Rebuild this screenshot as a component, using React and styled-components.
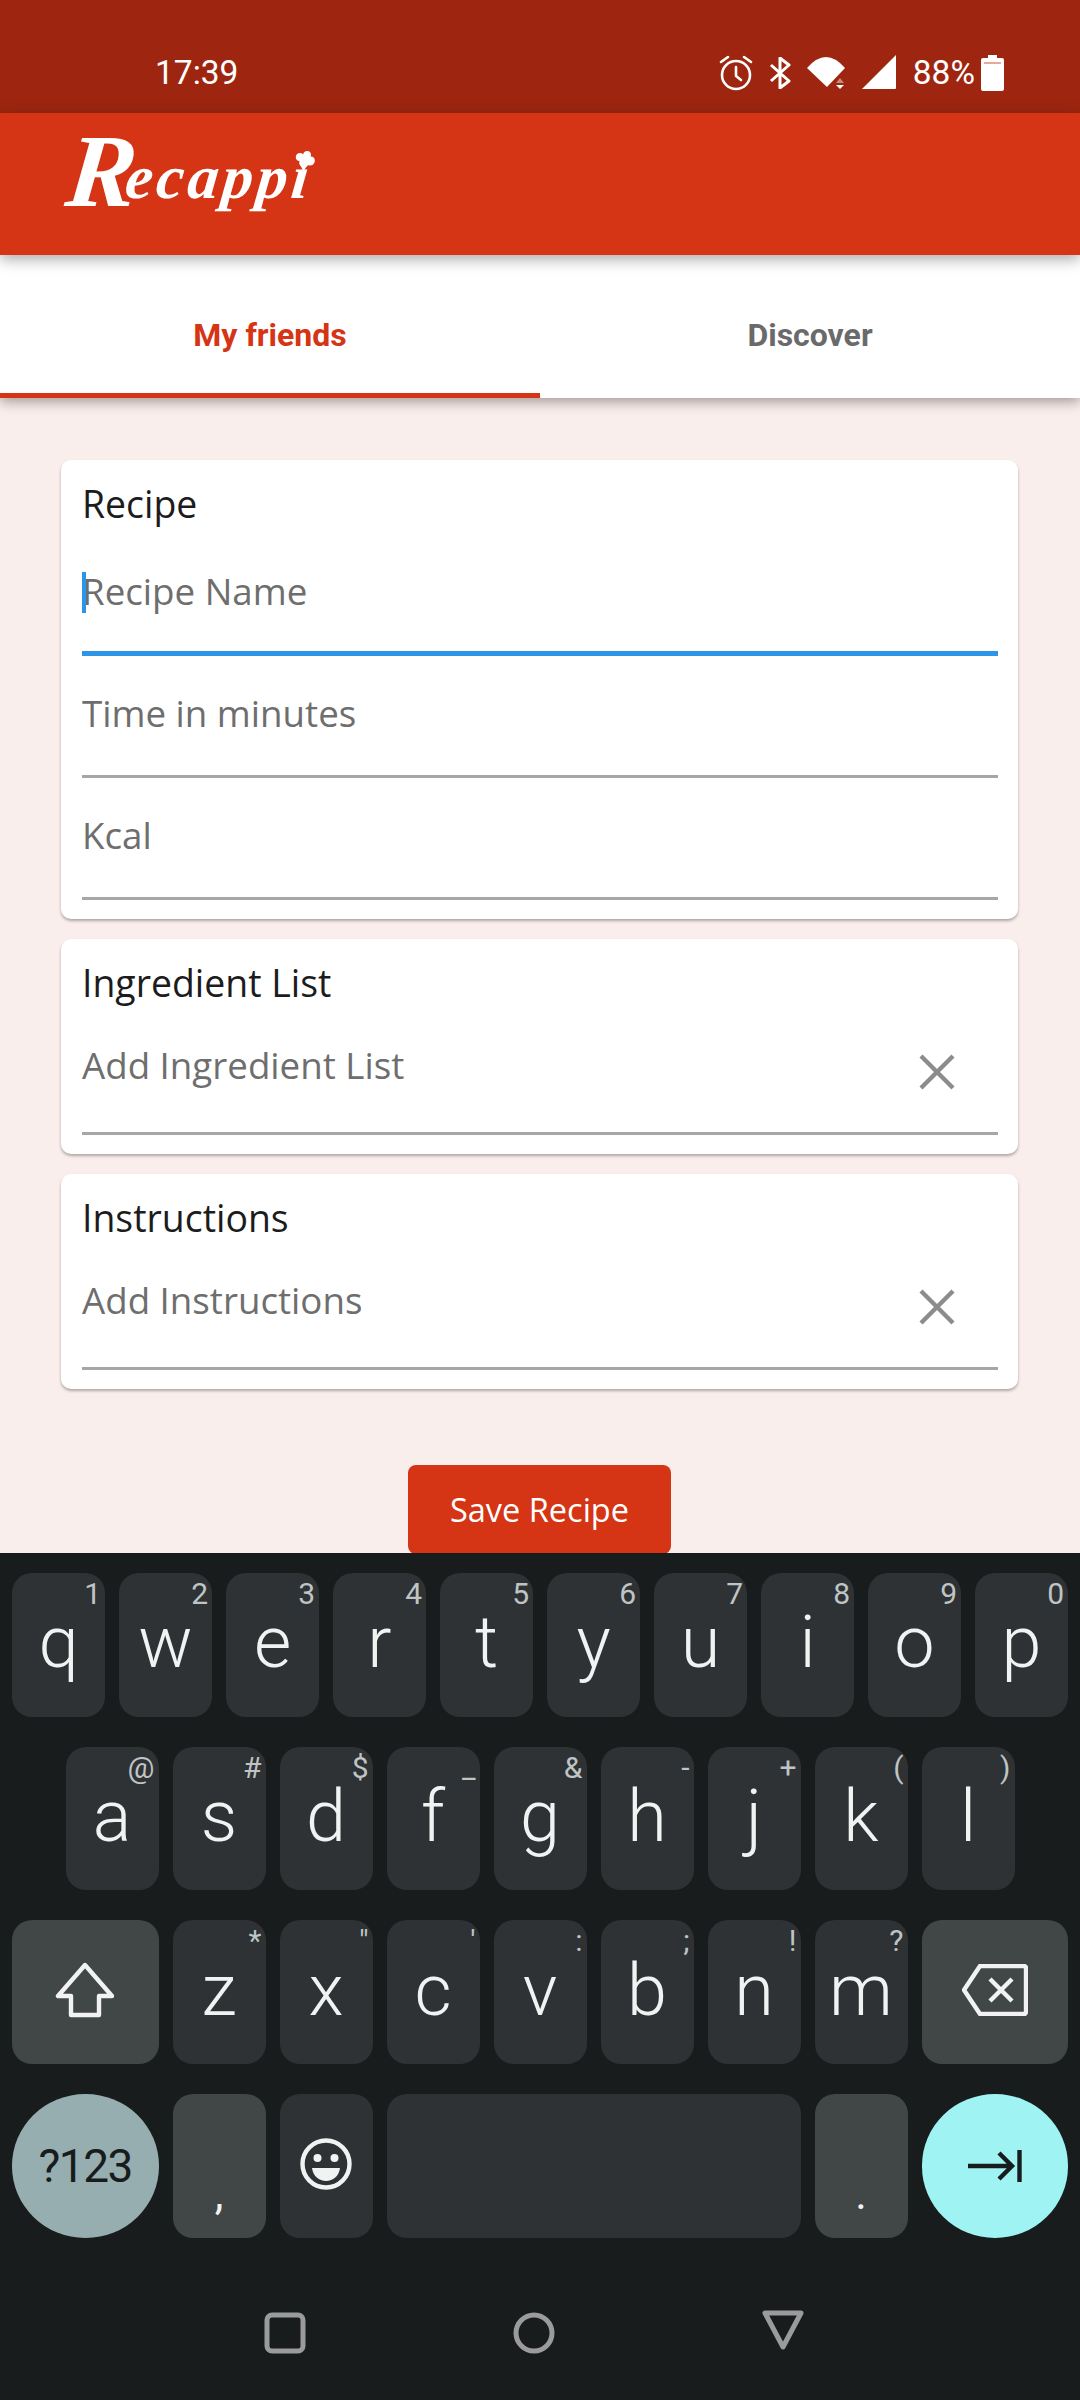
import React from "react";
import styled, { createGlobalStyle } from "styled-components";

const red = "#d53415";
const blue = "#2d95e8";
const keyboardBg = "#181c1d";

const row1 = [
  ["q", "1"], ["w", "2"], ["e", "3"], ["r", "4"], ["t", "5"],
  ["y", "6"], ["u", "7"], ["i", "8"], ["o", "9"], ["p", "0"],
];
const row2 = [
  ["a", "@"], ["s", "#"], ["d", "$"], ["f", "_"], ["g", "&"],
  ["h", "-"], ["j", "+"], ["k", "("], ["l", ")"],
];
const row3 = [
  ["z", "*"], ["x", '"'], ["c", "'"], ["v", ":"], ["b", ";"], ["n", "!"], ["m", "?"],
];

function AlarmIcon() {
  return (
    <svg width="34" height="36" viewBox="0 0 34 36" fill="none" stroke="#fff" strokeWidth="2.6" strokeLinecap="round">
      <circle cx="17" cy="20" r="14" />
      <path d="M17 12v9l5 4M2 7l7-5M32 7l-7-5" />
    </svg>
  );
}

function BluetoothIcon() {
  return (
    <svg width="22" height="32" viewBox="0 0 22 32" fill="none" stroke="#fff" strokeWidth="3" strokeLinejoin="round">
      <path d="M2 8l18 16-9 7V1l9 7L2 24" />
    </svg>
  );
}

function WifiIcon() {
  return (
    <svg width="39" height="32" viewBox="0 0 39 32">
      <path d="M0 11Q19-11 38 11L20 30Z" fill="#fff" />
      <path d="M29 26l4-5 4 5Z" fill="#fff" opacity=".45" />
      <path d="M29 28h8l-4 4Z" fill="#fff" />
    </svg>
  );
}

function SignalIcon() {
  return (
    <svg width="35" height="35" viewBox="0 0 35 35">
      <path d="M34 0v33a1 1 0 0 1-1 1H0Z" fill="#fff" />
    </svg>
  );
}

function BatteryIcon() {
  return (
    <svg width="23" height="36" viewBox="0 0 23 36">
      <path d="M7 0h9v3h5a2 2 0 0 1 2 2v29a2 2 0 0 1-2 2H2a2 2 0 0 1-2-2V5a2 2 0 0 1 2-2h5Z" fill="#fff" />
      <rect x="3" y="7" width="17" height="2" fill="#e9a898" />
    </svg>
  );
}

function CloseIcon() {
  return (
    <svg width="36" height="36" viewBox="0 0 36 36" stroke="#8c8c8c" strokeWidth="4.4">
      <path d="M2 2l32 32M34 2L2 34" />
    </svg>
  );
}

function ShiftIcon() {
  return (
    <svg width="60" height="56" viewBox="0 0 60 56" fill="none" stroke="#f1f3f3" strokeWidth="4.4" strokeLinejoin="round">
      <path d="M30 3L3 34h13v19h28V34h13Z" />
    </svg>
  );
}

function BackspaceIcon() {
  return (
    <svg width="66" height="52" viewBox="0 0 66 52" fill="none" stroke="#f1f3f3" strokeWidth="4.4" strokeLinejoin="round">
      <path d="M18 2h44a2 2 0 0 1 2 2v44a2 2 0 0 1-2 2H18L2 26Z" />
      <path d="M28 15l22 22M50 15L28 37" />
    </svg>
  );
}

function EmojiIcon() {
  return (
    <svg width="52" height="52" viewBox="0 0 52 52" fill="none">
      <circle cx="26" cy="26" r="23.5" stroke="#f1f3f3" strokeWidth="4.4" />
      <circle cx="17.5" cy="20" r="4" fill="#f1f3f3" />
      <circle cx="34.5" cy="20" r="4" fill="#f1f3f3" />
      <path d="M12 30h28c-1 8-7 13-14 13s-13-5-14-13Z" fill="#f1f3f3" />
    </svg>
  );
}

function TabArrowIcon() {
  return (
    <svg width="54" height="32" viewBox="0 0 54 32" fill="none" stroke={keyboardBg} strokeWidth="4.4">
      <path d="M0 16h44M31 3l13 13-13 13M51.5 0v32" />
    </svg>
  );
}

function SquareIcon() {
  return (
    <svg width="42" height="44" viewBox="0 0 42 44" fill="none" stroke="#9b9b9b" strokeWidth="5">
      <rect x="3" y="5" width="36" height="36" rx="5" />
    </svg>
  );
}

function CircleIcon() {
  return (
    <svg width="42" height="44" viewBox="0 0 42 44" fill="none" stroke="#9b9b9b" strokeWidth="5">
      <circle cx="21" cy="23" r="18" />
    </svg>
  );
}

function BackIcon() {
  return (
    <svg width="42" height="44" viewBox="0 0 42 44" fill="none" stroke="#9b9b9b" strokeWidth="5" strokeLinejoin="round">
      <path d="M3 3h36L21 37Z" />
    </svg>
  );
}

function FlowerIcon() {
  return (
    <svg width="22" height="21" viewBox="0 0 22 21" fill="#fff">
      <circle cx="6" cy="6" r="4" />
      <circle cx="13" cy="4" r="4" />
      <circle cx="17" cy="10" r="4.5" />
      <circle cx="11" cy="11" r="5" />
      <path d="M6 12l5 8 4-6Z" />
    </svg>
  );
}

function FormField({ placeholder, focused, compact, clearable }) {
  return (
    <Field $focused={focused} $compact={compact}>
      <Placeholder>
        {focused && <Caret />}
        {placeholder}
      </Placeholder>
      {clearable && (
        <ClearButton>
          <CloseIcon />
        </ClearButton>
      )}
    </Field>
  );
}

function LetterKey({ letter, hint }) {
  return (
    <Key>
      <Hint>{hint}</Hint>
      {letter}
    </Key>
  );
}

function App() {
  return (
    <Screen>
      <GlobalStyle />
      <StatusBar>
        <Clock>17:39</Clock>
        <StatusIcons>
          <AlarmIcon />
          <BluetoothIcon />
          <WifiIcon />
          <SignalIcon />
          <BatteryText>88%</BatteryText>
          <BatteryIcon />
        </StatusIcons>
      </StatusBar>

      <AppBar>
        <Logo>
          <LogoCap>R</LogoCap>ecappi
          <LogoFlower>
            <FlowerIcon />
          </LogoFlower>
        </Logo>
      </AppBar>

      <Tabs>
        <Tab $active>My friends</Tab>
        <Tab>Discover</Tab>
      </Tabs>

      <Content>
        <Card>
          <CardTitle>Recipe</CardTitle>
          <FormField placeholder="Recipe Name" focused />
          <FormField placeholder="Time in minutes" />
          <FormField placeholder="Kcal" />
        </Card>
        <Card>
          <CardTitle>Ingredient List</CardTitle>
          <FormField placeholder="Add Ingredient List" compact clearable />
        </Card>
        <Card>
          <CardTitle>Instructions</CardTitle>
          <FormField placeholder="Add Instructions" compact clearable />
        </Card>
        <SaveButton>Save Recipe</SaveButton>
      </Content>

      <Keyboard>
        <KeyRow>
          {row1.map(([letter, hint]) => (
            <LetterKey key={letter} letter={letter} hint={hint} />
          ))}
        </KeyRow>
        <KeyRow $inset>
          {row2.map(([letter, hint]) => (
            <LetterKey key={letter} letter={letter} hint={hint} />
          ))}
        </KeyRow>
        <KeyRow>
          <Key $wide $fn>
            <ShiftIcon />
          </Key>
          {row3.map(([letter, hint]) => (
            <LetterKey key={letter} letter={letter} hint={hint} />
          ))}
          <Key $wide $fn>
            <BackspaceIcon />
          </Key>
        </KeyRow>
        <KeyRow>
          <RoundKey $color="#96aeb0">?123</RoundKey>
          <PunctuationKey $fn>,</PunctuationKey>
          <EmojiKey>
            <EmojiIcon />
          </EmojiKey>
          <SpaceKey />
          <PunctuationKey $fn>.</PunctuationKey>
          <RoundKey $color="#a0f3f3">
            <TabArrowIcon />
          </RoundKey>
        </KeyRow>
        <NavBar>
          <SquareIcon />
          <CircleIcon />
          <BackIcon />
        </NavBar>
      </Keyboard>
    </Screen>
  );
}

export default App;

const GlobalStyle = createGlobalStyle`
  html, body {
    margin: 0;
    padding: 0;
    background: ${keyboardBg};
  }
  * {
    box-sizing: border-box;
  }
`;

const Screen = styled.div`
  width: 1080px;
  height: 2400px;
  display: flex;
  flex-direction: column;
  overflow: hidden;
  font-family: "Open Sans", "Liberation Sans", sans-serif;
`;

const StatusBar = styled.div`
  height: 113px;
  flex: none;
  background: #9e2610;
  display: flex;
  justify-content: space-between;
  align-items: center;
  padding: 32px 76px 0 155px;
  color: #fff;
  font-family: Roboto, sans-serif;
`;

const Clock = styled.span`
  font-size: 33.5px;
  font-weight: 400;
`;

const StatusIcons = styled.div`
  display: flex;
  align-items: center;
  gap: 16px;
`;

const BatteryText = styled.span`
  font-size: 33.5px;
  font-weight: 400;
  margin-right: -10px;
`;

const AppBar = styled.header`
  height: 142px;
  flex: none;
  background: ${red};
  padding: 8px 0 0 67px;
  position: relative;
  z-index: 3;
  box-shadow: 0 4px 14px rgba(0, 0, 0, 0.35);
`;

const Logo = styled.div`
  display: inline-block;
  position: relative;
  color: #fff;
  font-family: "Liberation Serif", serif;
  font-style: italic;
  font-weight: 700;
  font-size: 62px;
  letter-spacing: 3.5px;
  line-height: 100px;
  transform: skewX(-6deg);
`;

const LogoCap = styled.span`
  font-size: 104px;
  letter-spacing: -10px;
  vertical-align: -8px;
`;

const LogoFlower = styled.span`
  position: absolute;
  right: -1px;
  top: 30px;
  display: flex;
`;

const Tabs = styled.nav`
  height: 143px;
  flex: none;
  background: #fff;
  display: flex;
  position: relative;
  z-index: 2;
  box-shadow: 0 4px 12px rgba(0, 0, 0, 0.35);
  font-family: Roboto, sans-serif;
`;

const Tab = styled.div`
  flex: 1;
  display: flex;
  align-items: center;
  justify-content: center;
  font-size: 32px;
  font-weight: 700;
  padding-top: 22px;
  color: ${(p) => (p.$active ? red : "#6a6a6a")};
  border-bottom: 5px solid ${(p) => (p.$active ? red : "#fff")};
`;

const Content = styled.main`
  flex: 1;
  min-height: 0;
  background: #faeeec;
  overflow: hidden;
  padding: 62px 62px 0 61px;
  display: flex;
  flex-direction: column;
  gap: 20px;
`;

const Card = styled.section`
  background: #fff;
  border-radius: 10px;
  padding: 0 20px 19px 21px;
  box-shadow: 0 2px 3px rgba(0, 0, 0, 0.3);
`;

const CardTitle = styled.h2`
  margin: 0;
  height: 74px;
  padding-top: 21px;
  font-size: 37.4px;
  line-height: 46px;
  font-weight: 400;
  color: #1c1c1c;
`;

const Field = styled.div`
  height: 122px;
  display: flex;
  justify-content: space-between;
  align-items: flex-start;
  padding: ${(p) => (p.$compact ? "29px" : "34px")} 43px 0 0;
  border-bottom: ${(p) => (p.$focused ? `5px solid ${blue}` : "3px solid #a6a6a6")};
`;

const Placeholder = styled.span`
  position: relative;
  font-size: 36.7px;
  line-height: 46px;
  color: #6e6e6e;
`;

const Caret = styled.i`
  position: absolute;
  left: 0;
  top: 4px;
  width: 4px;
  height: 41px;
  background: ${blue};
`;

const ClearButton = styled.span`
  display: flex;
  margin-top: 12px;
`;

const SaveButton = styled.button`
  flex: none;
  align-self: center;
  width: 263px;
  height: 89px;
  margin-top: 56px;
  border: none;
  border-radius: 8px;
  background: ${red};
  color: #fff;
  font-family: inherit;
  font-size: 32.5px;
`;

const Keyboard = styled.div`
  height: 847px;
  flex: none;
  background: ${keyboardBg};
  padding: 20px 12px 0;
  display: flex;
  flex-direction: column;
  gap: 30px;
  position: relative;
  z-index: 1;
`;

const KeyRow = styled.div`
  height: 143.67px;
  flex: none;
  display: flex;
  gap: 14px;
  padding: 0 ${(p) => (p.$inset ? "53.5px" : "0")};
`;

const Key = styled.div`
  position: relative;
  flex: ${(p) => (p.$wide ? "0 0 146.5px" : "1 1 0")};
  min-width: 0;
  border-radius: 20px;
  background: ${(p) => (p.$fn ? "#414647" : "#2e3234")};
  color: #f1f3f3;
  display: flex;
  align-items: center;
  justify-content: center;
  padding-bottom: 4px;
  font-family: Roboto, sans-serif;
  font-weight: 300;
  font-size: 72px;
`;

const Hint = styled.span`
  position: absolute;
  top: 3px;
  right: 4px;
  font-size: 30px;
  font-weight: 400;
  color: #bfc4c4;
`;

const PunctuationKey = styled(Key)`
  flex: 0 0 93px;
  align-items: flex-end;
  padding-bottom: 22px;
  font-size: 44px;
  line-height: 44px;
  font-weight: 400;
`;

const EmojiKey = styled(Key)`
  flex: 0 0 93px;
`;

const SpaceKey = styled(Key)`
  flex: 1 1 0;
`;

const RoundKey = styled.div`
  flex: 0 0 146.5px;
  border-radius: 50%;
  background: ${(p) => p.$color};
  color: ${keyboardBg};
  display: flex;
  align-items: center;
  justify-content: center;
  font-family: Roboto, sans-serif;
  font-size: 46px;
  letter-spacing: -1.5px;
`;

const NavBar = styled.div`
  display: flex;
  justify-content: center;
  gap: 207px;
  padding: 42px 12px 0 0;
`;
